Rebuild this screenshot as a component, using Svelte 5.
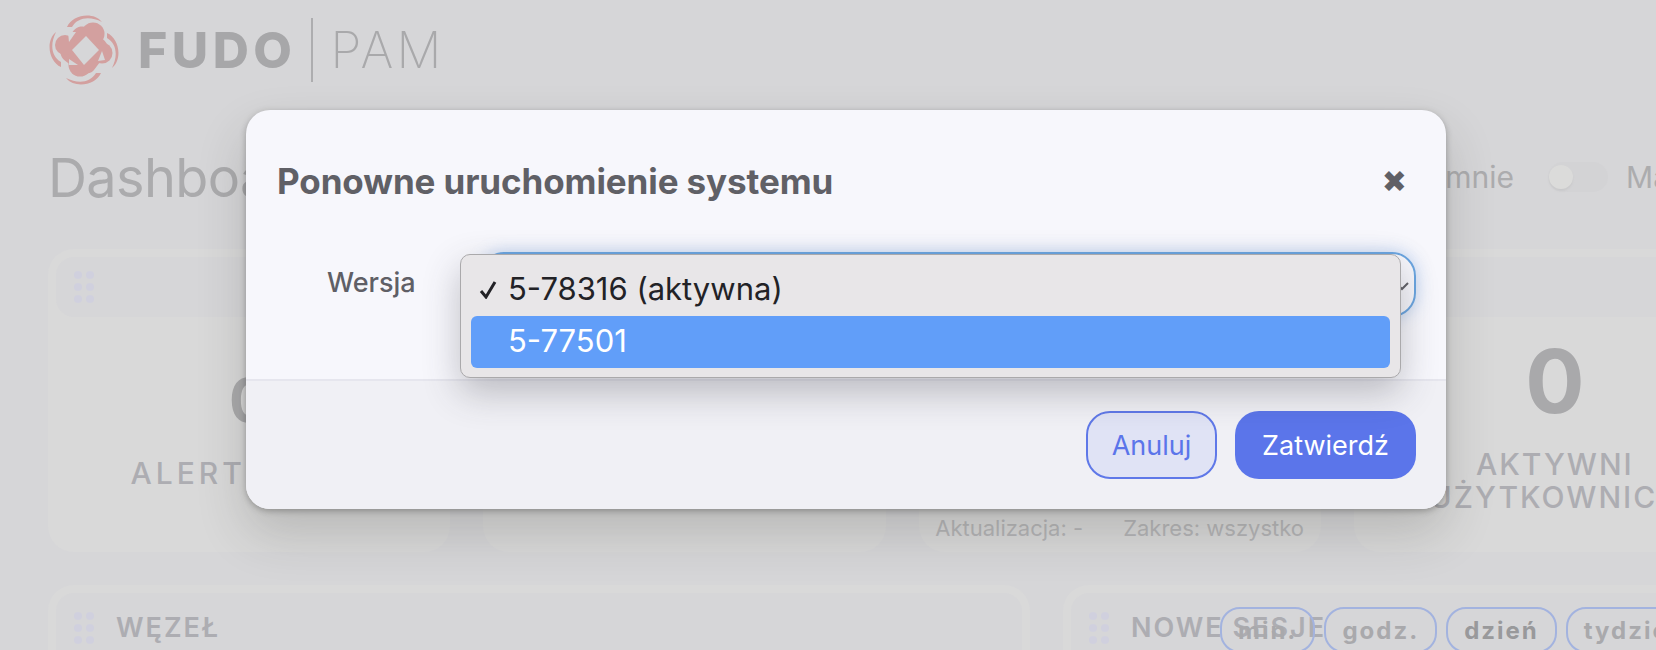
<script lang="ts">
	const cards = [
		{ value: '0', label: 'ALERTY DZIŚ', small: true, meta: [] },
		{ value: '0', label: '', small: false, meta: [] },
		{ value: '0', label: '', small: false, meta: ['Aktualizacja: -', 'Zakres: wszystko'] },
		{ value: '0', label: 'AKTYWNI UŻYTKOWNICY', small: false, meta: [] }
	];
	const ranges = ['min.', 'godz.', 'dzień', 'tydzień'];
	let active = $state('dzień');
	let open = $state(true);
</script>

{#snippet grip()}
	<span class="grip">
		{#each Array(6) as _}<i></i>{/each}
	</span>
{/snippet}

<div class="page">
	<header class="brand">
		<svg class="mark" viewBox="0 0 72 72" aria-hidden="true">
			{#each [0, 90, 180, 270] as r}
				<path class="petal" transform="rotate({r} 36 36)" d="M19 13C24 1 45-3 54 8C42 2 30 3 24 13Z" />
			{/each}
			<rect class="petal" x="16" y="16" width="40" height="40" rx="11" transform="rotate(37 36 36)" />
			<circle class="petal" cx="45" cy="20" r="11.5" />
			<circle class="petal" cx="54" cy="39" r="10.5" />
			<circle class="petal" cx="32" cy="51" r="11.5" />
			<circle class="petal" cx="17" cy="31" r="10" />
			<path class="hole" d="M38 22L51 36L36 51L24 36Z" />
			<path class="hole" d="M20 18L28 18L21 28Z" />
			<path class="hole" d="M54 37L57 46L50 47Z" />
			<path class="hole" d="M21 45L30 51L21 51Z" />
		</svg>
		<span class="fudo">FUDO</span>
		<span class="rule"></span>
		<span class="pam">PAM</span>
	</header>

	<main class="content">
		<div class="title-row">
			<h1>Dashboard</h1>
			<div class="controls">
				<span>Przypisane do mnie</span>
				<span class="toggle"><i></i></span>
				<span>Ma</span>
			</div>
		</div>

		<section class="row-top">
			{#each cards as card}
				<article class="card">
					<div class="card-head">{@render grip()}</div>
					<div class="card-body">
						<div class="value" class:small={card.small}>{card.value}</div>
						{#if card.label}<div class="label" class:wide={card.small}>{card.label}</div>{/if}
					</div>
					{#if card.meta.length}
						<div class="meta">
							{#each card.meta as m}<span>{m}</span>{/each}
						</div>
					{/if}
				</article>
			{/each}
		</section>

		<section class="row-bottom">
			<article class="card">
				<div class="card-head wide">{@render grip()}<h2>WĘZEŁ</h2></div>
			</article>
			<article class="card">
				<div class="card-head wide">
					{@render grip()}<h2>NOWE SESJE</h2>
					<div class="ranges">
						{#each ranges as r}
							<button class="range" class:on={active === r} onclick={() => (active = r)}>{r}</button>
						{/each}
					</div>
				</div>
			</article>
		</section>
	</main>

	<div class="modal">
		<div class="modal-head">
			<h3>Ponowne uruchomienie systemu</h3>
			<button class="close" aria-label="Zamknij">✖</button>
		</div>
		<div class="modal-body">
			<span class="field-label">Wersja</span>
			<div class="select">
				<svg class="chevron" viewBox="0 0 16 16" aria-hidden="true"><path d="M2 5l6 6 6-6" /></svg>
				{#if open}
					<div class="menu">
						<div class="option"><svg class="check" viewBox="0 0 18 18" aria-hidden="true"><path d="M2 10l5 6 9-15" /></svg>5-78316 (aktywna)</div>
						<div class="option hover">5-77501</div>
					</div>
				{/if}
			</div>
		</div>
		<div class="modal-foot">
			<button class="btn ghost">Anuluj</button>
			<button class="btn primary">Zatwierdź</button>
		</div>
	</div>
</div>

<style>
	:global(body) {
		background: #d6d6d8;
		font-family: Inter, 'Liberation Sans', sans-serif;
	}
	.page {
		position: relative;
		width: 1656px;
		height: 650px;
		overflow: hidden;
		background: #d6d6d8;
	}

	.brand {
		display: flex;
		align-items: center;
		height: 72px;
		padding: 14px 0 0 48px;
	}
	.mark {
		width: 72px;
		height: 72px;
		margin-right: 18px;
	}
	.petal {
		fill: #d3a09f;
	}
	.hole {
		fill: #d6d6d8;
	}
	.fudo {
		font-size: 50px;
		font-weight: 800;
		letter-spacing: 4.5px;
		color: #a7a7a9;
	}
	.rule {
		width: 2px;
		height: 64px;
		margin: 0 17px 0 15px;
		background: #adadaf;
	}
	.pam {
		font-size: 50px;
		font-weight: 200;
		letter-spacing: 3px;
		color: #a9a9ab;
	}

	.content {
		width: 1708px;
		margin-left: 48px;
	}
	.title-row {
		display: flex;
		align-items: center;
		justify-content: space-between;
		box-sizing: border-box;
		height: 163px;
		padding-top: 19px;
	}
	h1 {
		margin: 0;
		font-size: 54px;
		font-weight: 400;
		letter-spacing: -0.6px;
		color: #ababad;
	}
	.controls {
		display: flex;
		align-items: center;
		gap: 18px;
		padding-right: 86px;
		font-size: 30px;
		color: #acacae;
	}
	.toggle {
		display: block;
		width: 60px;
		height: 30px;
		margin-left: 16px;
		border-radius: 15px;
		background: #d3d3d5;
	}
	.toggle i {
		display: block;
		width: 24px;
		height: 24px;
		margin: 3px 0 0 1px;
		border-radius: 50%;
		background: #dbdbda;
		box-shadow: 0 2px 2px #c9c9cb;
	}

	.row-top {
		display: grid;
		grid-template-columns: repeat(4, 1fr);
		gap: 33px;
		height: 303px;
	}
	.row-bottom {
		display: grid;
		grid-template-columns: 982px 1fr;
		gap: 33px;
		margin-top: 33px;
	}
	.card {
		display: flex;
		flex-direction: column;
		padding: 8px;
		border-radius: 26px;
		background: #d9d9d9;
	}
	.card-head {
		position: relative;
		display: flex;
		align-items: center;
		flex: none;
		height: 60px;
		padding-left: 18px;
		border-radius: 18px;
		background: #d6d6d8;
	}
	.card-head.wide {
		height: 120px;
		align-items: flex-start;
	}
	.grip {
		display: grid;
		grid-template-columns: 8px 8px;
		gap: 4px;
	}
	.card-head.wide .grip {
		margin-top: 19px;
	}
	.grip i {
		width: 8px;
		height: 8px;
		border-radius: 50%;
		background: #d0d0de;
	}
	h2 {
		margin: 18px 0 0 22px;
		font-size: 27px;
		font-weight: 600;
		letter-spacing: 2px;
		color: #adadb2;
	}
	.card-body {
		display: flex;
		flex: 1;
		flex-direction: column;
		align-items: center;
		justify-content: center;
		padding-bottom: 14px;
		text-align: center;
	}
	.value {
		margin-bottom: 18px;
		font-size: 88px;
		font-weight: 700;
		line-height: 1.1;
		color: #a9a9ab;
	}
	.value.small {
		margin-top: 10px;
		margin-bottom: 24px;
		font-size: 60px;
	}
	.label {
		font-size: 30px;
		font-weight: 500;
		line-height: 33px;
		letter-spacing: 2px;
		color: #adadb2;
	}
	.label.wide {
		letter-spacing: 4px;
	}
	.meta {
		display: flex;
		justify-content: center;
		gap: 40px;
		padding-bottom: 2px;
		font-size: 22px;
		line-height: 28px;
		color: #b5b5b7;
	}
	.ranges {
		position: absolute;
		top: 14px;
		left: 149px;
		display: flex;
		gap: 9px;
	}
	.range {
		height: 46px;
		padding: 0 16px;
		border: 2px solid #a3b3df;
		border-radius: 20px;
		background: none;
		font: inherit;
		font-size: 24px;
		font-weight: 700;
		letter-spacing: 2px;
		color: #a9a9ac;
	}
	.range.on {
		color: #99999b;
	}

	.modal {
		position: absolute;
		top: 110px;
		left: 246px;
		width: 1200px;
		height: 399px;
		display: flex;
		flex-direction: column;
		border-radius: 24px;
		background: #f7f7fc;
		box-shadow: 0 24px 50px rgba(50, 50, 45, 0.2), 0 2px 6px rgba(50, 50, 45, 0.35);
	}
	.modal-head {
		display: flex;
		align-items: center;
		justify-content: space-between;
		padding: 50px 39px 0 31px;
	}
	h3 {
		margin: 0;
		font-size: 35px;
		font-weight: 700;
		letter-spacing: -0.1px;
		color: #606066;
	}
	.close {
		padding: 0;
		border: none;
		background: none;
		font-family: 'DejaVu Sans', sans-serif;
		font-size: 30px;
		color: #606066;
	}
	.modal-body {
		display: flex;
		flex: 1;
		align-items: flex-start;
		padding: 50px 30px 0 81px;
	}
	.field-label {
		width: 88px;
		margin-top: 14px;
		font-size: 27px;
		font-weight: 500;
		color: #5f5f66;
	}
	.select {
		position: relative;
		width: 936px;
		height: 65px;
		margin-left: 65px;
		box-sizing: border-box;
		border: 2px solid #6aa5e0;
		border-radius: 24px;
		box-shadow: 0 0 16px rgba(90, 150, 230, 0.35);
	}
	.chevron {
		position: absolute;
		top: 24px;
		right: 4px;
		width: 16px;
		height: 16px;
		fill: none;
		stroke: #606066;
		stroke-width: 2;
	}
	.menu {
		position: absolute;
		top: 0;
		left: -22px;
		width: 941px;
		height: 124px;
		box-sizing: border-box;
		padding: 9px 10px;
		border: 1px solid #aaa9ab;
		border-radius: 10px;
		background: #e8e6e8;
		box-shadow: 0 14px 36px rgba(60, 60, 70, 0.3);
		font-size: 31px;
		color: #222226;
	}
	.option {
		position: relative;
		height: 52px;
		padding-left: 37px;
		line-height: 50px;
		border-radius: 6px;
	}
	.option.hover {
		background: #619ef9;
		color: #fff;
	}
	.check {
		position: absolute;
		top: 17px;
		left: 8px;
		width: 18px;
		height: 18px;
		fill: none;
		stroke: #222226;
		stroke-width: 3;
	}
	.modal-foot {
		display: flex;
		justify-content: flex-end;
		gap: 18px;
		padding: 30px 30px;
		border-top: 2px solid #e6e6ee;
		border-radius: 0 0 24px 24px;
		background: #f0f0f5;
	}
	.btn {
		height: 68px;
		box-sizing: border-box;
		border-radius: 24px;
		font: inherit;
		font-size: 27px;
		font-weight: 400;
	}
	.ghost {
		width: 131px;
		border: 2px solid #5f78e8;
		background: #e0e3f5;
		color: #5b75ea;
	}
	.primary {
		width: 181px;
		border: none;
		background: #5b75ea;
		color: #fff;
	}
</style>
